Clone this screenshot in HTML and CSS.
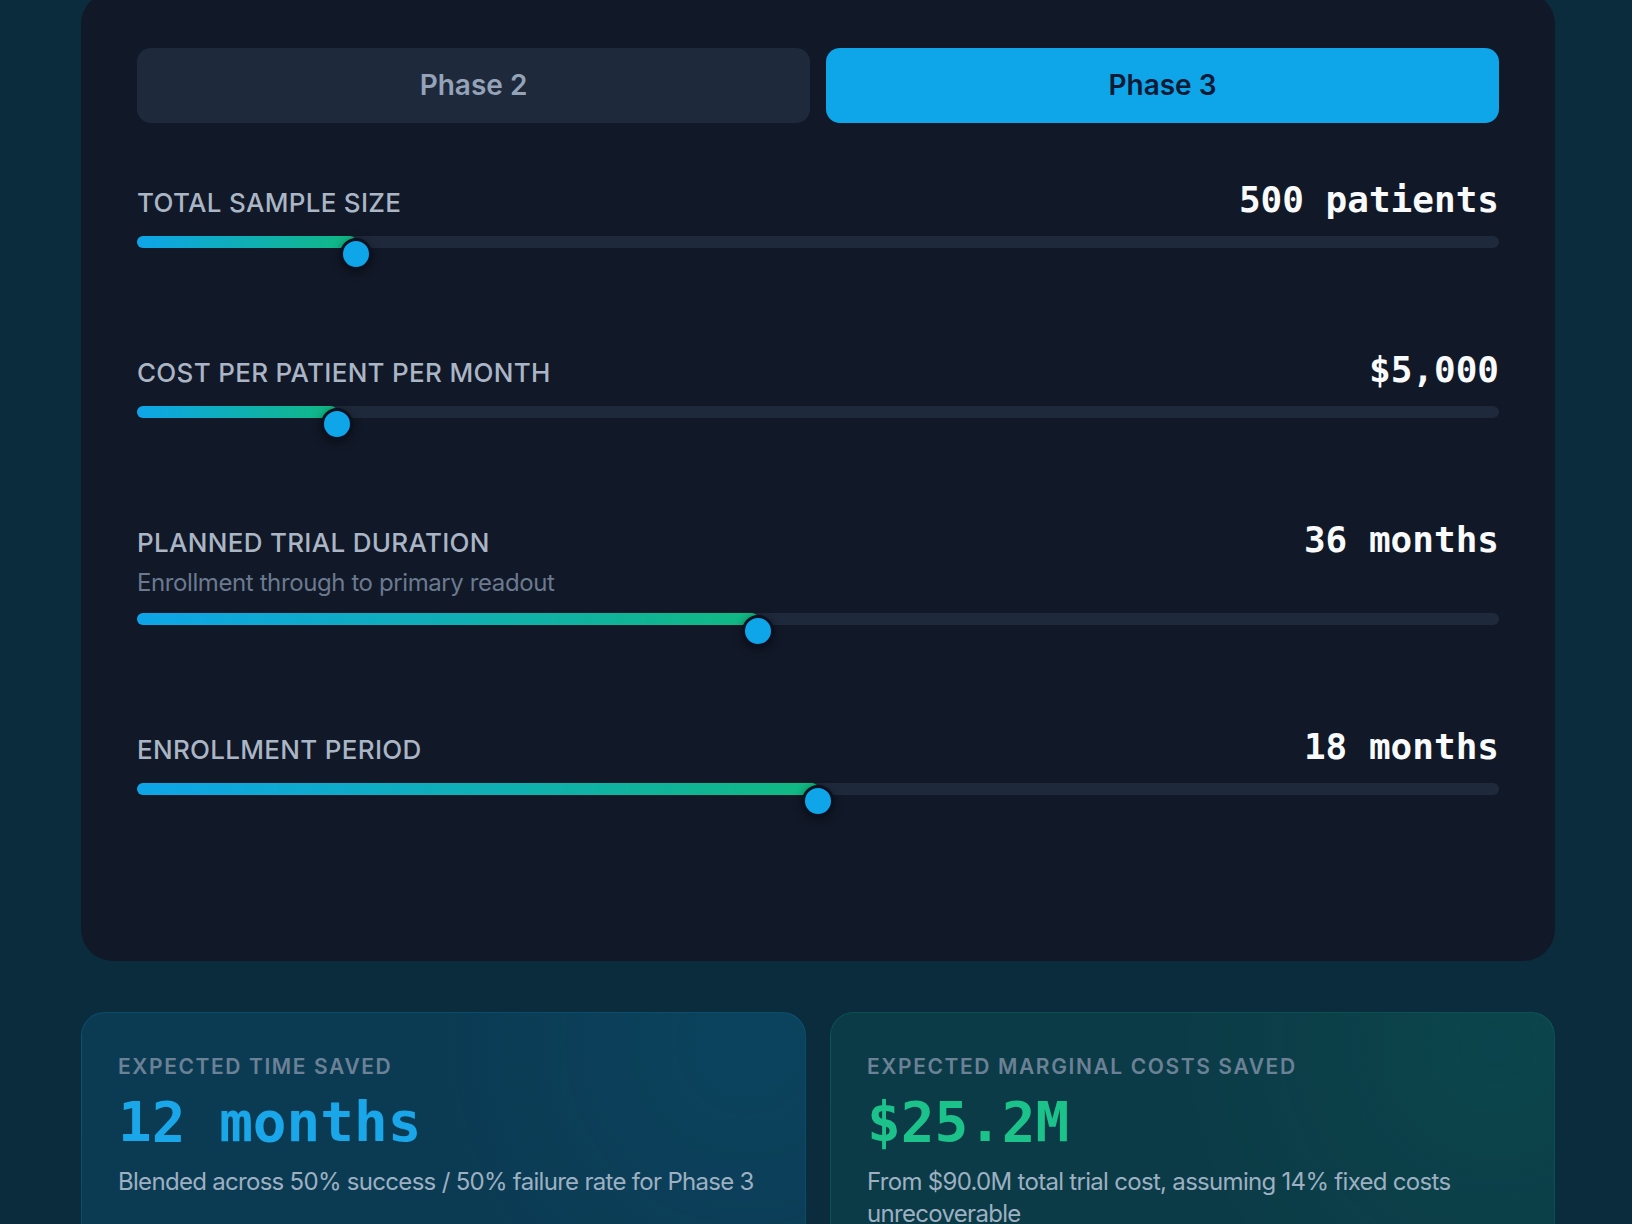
FILE: index.html
```html
<!DOCTYPE html>
<html lang="en">
<head>
<meta charset="utf-8">
<title>Trial savings calculator</title>
<link rel="stylesheet" href="styles.css">
</head>
<body>
<div class="page">
  <section class="panel">
    <div class="phases">
      <button class="phase">Phase 2</button>
      <button class="phase phase-active">Phase 3</button>
    </div>

    <div class="slider">
      <div class="slider-head">
        <div class="slider-text"><span class="slider-label">Total sample size</span></div>
        <span class="slider-value">500 patients</span>
      </div>
      <div class="track"><div class="fill" style="width:16.1%"></div><div class="thumb" style="left:16.1%"></div></div>
    </div>

    <div class="slider">
      <div class="slider-head">
        <div class="slider-text"><span class="slider-label">Cost per patient per month</span></div>
        <span class="slider-value">$5,000</span>
      </div>
      <div class="track"><div class="fill" style="width:14.7%"></div><div class="thumb" style="left:14.7%"></div></div>
    </div>

    <div class="slider">
      <div class="slider-head">
        <div class="slider-text"><span class="slider-label">Planned trial duration</span></div>
        <span class="slider-value">36 months</span>
      </div>
      <p class="slider-sub">Enrollment through to primary readout</p>
      <div class="track"><div class="fill" style="width:45.6%"></div><div class="thumb" style="left:45.6%"></div></div>
    </div>

    <div class="slider">
      <div class="slider-head">
        <div class="slider-text"><span class="slider-label">Enrollment period</span></div>
        <span class="slider-value">18 months</span>
      </div>
      <div class="track"><div class="fill" style="width:50%"></div><div class="thumb" style="left:50%"></div></div>
    </div>
  </section>

  <div class="results">
    <div class="card card-time">
      <div class="card-label">Expected time saved</div>
      <div class="card-value">12 months</div>
      <p class="card-note">Blended across 50% success / 50% failure rate for Phase 3</p>
    </div>
    <div class="card card-cost">
      <div class="card-label">Expected marginal costs saved</div>
      <div class="card-value">$25.2M</div>
      <p class="card-note">From $90.0M total trial cost, assuming 14% fixed costs unrecoverable</p>
    </div>
  </div>
</div>
</body>
</html>
```

FILE: styles.css
```css
* { box-sizing: border-box; }

html, body {
  margin: 0;
  padding: 0;
}

body {
  background: #0b2c3d;
  font-family: Inter, "Noto Sans", "Liberation Sans", sans-serif;
  color: #e2e8f0;
  height: 1224px;
  overflow: hidden;
}

.page {
  width: 1474px;
  margin-left: 81px;
}

.panel {
  margin-top: -8px;
  background: #111827;
  border-radius: 32px;
  padding: 56px 56px 66px;
}

.phases {
  display: grid;
  grid-template-columns: 1fr 1fr;
  gap: 16px;
  margin-bottom: 55px;
}

.phase {
  border: 0;
  border-radius: 14px;
  background: #1e293b;
  color: #94a3b8;
  font-family: Inter, "Noto Sans", sans-serif;
  font-size: 28px;
  font-weight: 600;
  line-height: 43px;
  padding: 16px;
  text-align: center;
}

.phase-active {
  background: #0ea5e9;
  color: #0c1a36;
}

.slider {
  margin-bottom: 100px;
}

.slider-head {
  display: flex;
  justify-content: space-between;
  align-items: baseline;
  height: 44px;
}

.slider-label {
  font-size: 26px;
  font-weight: 500;
  line-height: 32px;
  letter-spacing: 0.3px;
  text-transform: uppercase;
  color: #aab5c5;
}

.slider-value {
  font-family: "DejaVu Sans Mono", "Liberation Mono", monospace;
  font-weight: 700;
  font-size: 36px;
  line-height: 44px;
  color: #f8fafc;
}

.slider-sub {
  margin: 5px 0 0;
  font-size: 24px;
  line-height: 32px;
  letter-spacing: -0.4px;
  color: #6b7a8f;
}

.track {
  position: relative;
  margin-top: 14px;
  height: 12px;
  border-radius: 6px;
  background: #1e293b;
}

.fill {
  height: 12px;
  border-radius: 6px;
  background: linear-gradient(90deg, #0ea5e9, #10b981);
}

.thumb {
  position: absolute;
  top: 2px;
  width: 32px;
  height: 32px;
  margin-left: -16px;
  border-radius: 50%;
  background: #0ea5e9;
  border: 3px solid #0b1120;
  box-shadow: 0 2px 10px rgba(0, 0, 0, 0.45);
}

.results {
  margin-top: 51px;
  display: grid;
  grid-template-columns: 1fr 1fr;
  gap: 24px;
}

.card {
  border-radius: 24px;
  padding: 37px 36px 36px;
  height: 260px;
}

.card-time {
  border: 1px solid rgba(14, 165, 233, 0.16);
  background:
    radial-gradient(circle at 92% 12%, rgba(14, 165, 233, 0.08), rgba(14, 165, 233, 0) 45%),
    rgba(14, 165, 233, 0.13);
}

.card-cost {
  border: 1px solid rgba(16, 185, 129, 0.16);
  background:
    radial-gradient(circle at 92% 12%, rgba(16, 185, 129, 0.08), rgba(16, 185, 129, 0) 45%),
    rgba(20, 170, 150, 0.12);
}

.card-label {
  font-size: 21px;
  font-weight: 600;
  line-height: 33px;
  letter-spacing: 1.6px;
  text-transform: uppercase;
  color: #6b8196;
}

.card-value {
  margin-top: 5px;
  font-family: "DejaVu Sans Mono", "Liberation Mono", monospace;
  font-weight: 700;
  font-size: 56px;
  line-height: 67px;
}

.card-time .card-value { color: #19a7ea; }
.card-cost .card-value { color: #1bc28a; }

.card-note {
  margin: 11px 0 0;
  font-size: 24px;
  line-height: 32px;
  letter-spacing: -0.7px;
  color: #9db0c2;
}
```
